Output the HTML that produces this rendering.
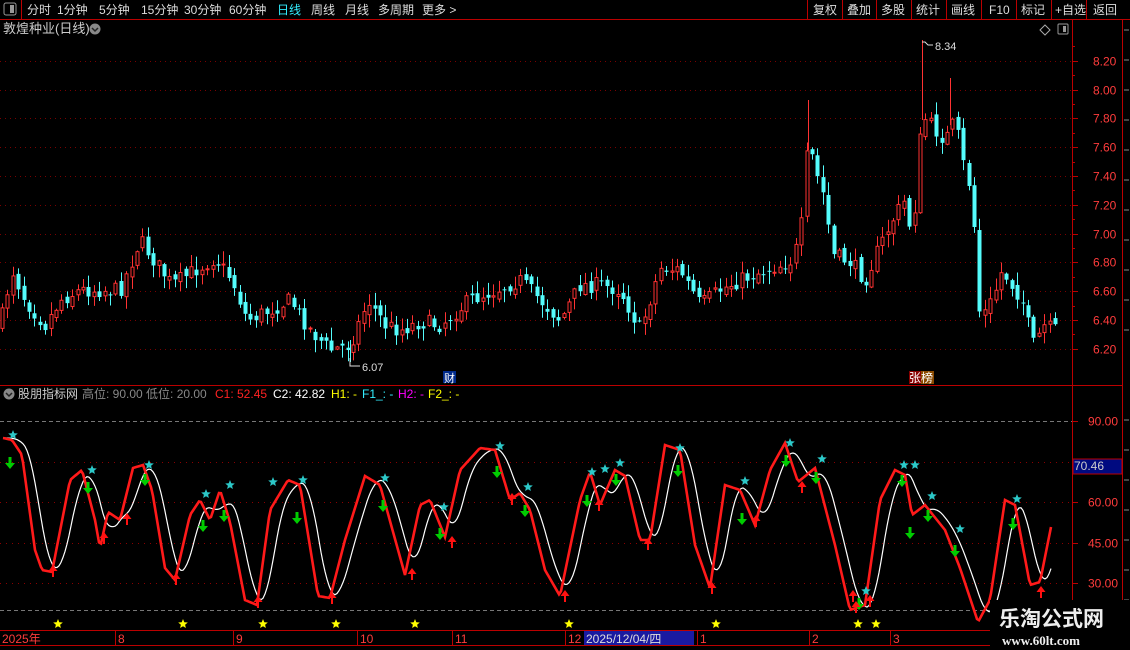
<!DOCTYPE html>
<html><head><meta charset="utf-8">
<style>
html,body{margin:0;padding:0;background:#000;width:1130px;height:650px;overflow:hidden;font-family:"Liberation Sans","Noto Sans CJK SC",sans-serif}
svg{position:absolute;left:0;top:0}
</style></head><body>
<svg id="s" width="1130" height="650" xmlns="http://www.w3.org/2000/svg" font-family="Liberation Sans, Noto Sans CJK SC, sans-serif">
<rect width="1130" height="650" fill="#000"/>
<line x1="0" y1="19.5" x2="1130" y2="19.5" stroke="#b00" />
<rect x="4" y="3" width="12" height="12" rx="2" fill="none" stroke="#999"/><rect x="10" y="5" width="4" height="8" fill="#999"/>
<line x1="21.5" y1="0" x2="21.5" y2="19" stroke="#b00"/>
<g font-size="12" fill="#ddd">
<text x="27" y="14">分时</text><text x="57" y="14">1分钟</text><text x="99" y="14">5分钟</text><text x="141" y="14">15分钟</text><text x="184" y="14">30分钟</text><text x="229" y="14">60分钟</text>
<text x="277" y="14" fill="#3ef">日线</text><text x="311" y="14">周线</text><text x="345" y="14">月线</text><text x="378" y="14">多周期</text><text x="422" y="14">更多 &gt;</text>
<text x="813" y="14">复权</text><text x="847" y="14">叠加</text><text x="881" y="14">多股</text><text x="916" y="14">统计</text><text x="951" y="14">画线</text><text x="989" y="14">F10</text><text x="1021" y="14">标记</text><text x="1055" y="14">+自选</text><text x="1093" y="14">返回</text>
</g>
<g stroke="#b00"><line x1="807.5" y1="0" x2="807.5" y2="19"/><line x1="842.5" y1="0" x2="842.5" y2="19"/><line x1="876.5" y1="0" x2="876.5" y2="19"/><line x1="911.5" y1="0" x2="911.5" y2="19"/><line x1="946.5" y1="0" x2="946.5" y2="19"/><line x1="981.5" y1="0" x2="981.5" y2="19"/><line x1="1016.5" y1="0" x2="1016.5" y2="19"/><line x1="1051.5" y1="0" x2="1051.5" y2="19"/><line x1="1086.5" y1="0" x2="1086.5" y2="19"/>
<line x1="1072.5" y1="20" x2="1072.5" y2="630"/><line x1="1122.5" y1="20" x2="1122.5" y2="650"/>
<line x1="0" y1="385.5" x2="1122" y2="385.5"/>
<line x1="0" y1="630.5" x2="1072" y2="630.5"/><line x1="0" y1="645.5" x2="1072" y2="645.5"/>
</g>
<text x="3" y="33" font-size="13" fill="#ccc">敦煌种业(日线)</text>
<circle cx="95" cy="29" r="5.5" fill="#888"/><path d="M92 28l3 3 3-3" stroke="#222" fill="none" stroke-width="1.5"/>
<path d="M1045 25l5 5-5 5-5-5z" fill="none" stroke="#aaa"/>
<rect x="1058" y="24" width="10" height="10" rx="1" fill="none" stroke="#999"/><rect x="1063" y="26" width="3" height="6" fill="#999"/>
<g id="grid"></g>
<g id="candles"></g>
<g stroke="#ff3232"><line x1="922.5" y1="40" x2="922.5" y2="120"/><line x1="808.5" y1="100" x2="808.5" y2="150"/><line x1="950.5" y1="78" x2="950.5" y2="125"/></g>
<line x1="350.5" y1="340" x2="350.5" y2="362" stroke="#54fcfc"/>
<g font-size="12" fill="#ff3c3c" id="pax"></g>
<text x="362" y="371" font-size="11" fill="#ddd">6.07</text><path d="M350 358v8h10" stroke="#ddd" fill="none"/>
<text x="935" y="50" font-size="11" fill="#ddd">8.34</text><path d="M922 42h3l3 3h5" stroke="#ddd" fill="none"/>
<rect x="443" y="371" width="13" height="12" fill="#002a8a"/><text x="444" y="382" font-size="11" fill="#fff">财</text>
<rect x="909" y="371" width="13" height="13" fill="#800"/><rect x="921" y="371" width="13" height="13" fill="#8a4a00"/><text x="909" y="382" font-size="12" fill="#fff">张榜</text>
<circle cx="9" cy="394" r="5.5" fill="#888"/><path d="M6 393l3 3 3-3" stroke="#222" fill="none" stroke-width="1.5"/>
<text y="398" font-size="12"><tspan x="18" fill="#ccc">股朋指标网</tspan><tspan x="82" fill="#888">高位: 90.00  低位: 20.00</tspan><tspan x="215" fill="#f22">C1: 52.45</tspan><tspan x="273" fill="#fff">C2: 42.82</tspan><tspan x="331" fill="#ff0">H1: -</tspan><tspan x="362" fill="#3ef">F1_: -</tspan><tspan x="398" fill="#f0f">H2: -</tspan><tspan x="428" fill="#ff0">F2_: -</tspan></text>
<g id="igrid"></g>
<g id="ind"></g>
<rect x="1073" y="459" width="49" height="15" fill="#000a80" stroke="#b00"/><text x="1074" y="470" font-size="12" fill="#ccc">70.46</text>
<g font-size="12" fill="#ff3c3c"><text x="2" y="643">2025年</text><text x="118" y="643">8</text><text x="236" y="643">9</text><text x="360" y="643">10</text><text x="455" y="643">11</text><text x="568" y="643">12</text><text x="700" y="643">1</text><text x="812" y="643">2</text><text x="893" y="643">3</text></g>
<g stroke="#b00"><line x1="115.5" y1="630" x2="115.5" y2="645"/><line x1="233.5" y1="630" x2="233.5" y2="645"/><line x1="357.5" y1="630" x2="357.5" y2="645"/><line x1="452.5" y1="630" x2="452.5" y2="645"/><line x1="565.5" y1="630" x2="565.5" y2="645"/><line x1="697.5" y1="630" x2="697.5" y2="645"/><line x1="809.5" y1="630" x2="809.5" y2="645"/><line x1="890.5" y1="630" x2="890.5" y2="645"/></g>
<rect x="584" y="631" width="110" height="14" fill="#1a1aa0"/><text x="586" y="643" font-size="12" fill="#ddd">2025/12/04/四</text>
<rect x="1123" y="20" width="7" height="630" fill="#000"/>
<g stroke="#888" stroke-width="1"><path d="M1124 30h5M1124 60h5M1124 90h5M1124 120h5M1124 150h5M1124 180h5M1124 210h5M1124 240h5M1124 270h5M1124 300h5M1124 330h5M1124 420h5M1124 450h5M1124 480h5M1124 510h5M1124 540h5M1124 570h5M1124 600h5"/></g>
<rect x="990" y="600" width="140" height="50" fill="#000"/>
<text x="999" y="626" font-size="21" font-weight="bold" fill="#eee">乐淘公式网</text>
<text x="1002" y="645" font-size="13" font-weight="bold" fill="#eee" font-family="Liberation Serif, serif">www.60lt.com</text>
</svg>
<script>
(function(){
var NS="http://www.w3.org/2000/svg";
function el(p,t,a){var e=document.createElementNS(NS,t);for(var k in a)e.setAttribute(k,a[k]);p.appendChild(e);return e;}
var g=document.getElementById('grid'),pax=document.getElementById('pax');
for(var i=0;i<11;i++){var p=8.2-i*0.2,y=Math.round(60.7+i*28.8)+0.5;
el(g,'line',{x1:0,y1:y,x2:1072,y2:y,stroke:'#7a0000','stroke-dasharray':'1,4'});
el(g,'line',{x1:1072,y1:y,x2:1078,y2:y,stroke:'#b00'});
var t=el(pax,'text',{x:1093,y:y+4});t.textContent=p.toFixed(2);}
for(var i=0;i<21;i++){var y=Math.round(46.3+i*14.4)+0.5;el(g,'line',{x1:1072,y1:y,x2:1075,y2:y,stroke:'#b00'});}
var K=[[0,325],[12,270],[25,300],[45,325],[60,300],[80,290],[100,290],[120,290],[140,240],[155,262],[172,285],[195,270],[215,258],[232,280],[247,320],[270,310],[290,300],[310,330],[330,350],[350,345],[368,300],[385,325],[400,330],[420,322],[440,325],[470,300],[495,290],[520,280],[540,300],[560,320],[580,285],[600,285],[620,290],[640,330],[660,268],[680,270],[700,305],[720,290],[740,280],[770,268],[790,262],[800,240],[808,140],[815,170],[825,200],[832,255],[850,262],[865,280],[880,245],[895,215],[905,200],[912,240],[922,115],[935,130],[945,140],[955,120],[962,160],[972,195],[980,320],[992,300],[1002,270],[1012,285],[1022,300],[1033,345],[1045,325],[1052,330]];
function interp(A,x){for(var i=1;i<A.length;i++){if(x<=A[i][0]){var a=A[i-1],b=A[i],t=(x-a[0])/(b[0]-a[0]);return a[1]+t*(b[1]-a[1]);}}return A[A.length-1][1];}
var seed=7;function rnd(){seed=(seed*16807)%2147483647;return seed/2147483647;}
var cg=document.getElementById('candles');var prev=interp(K,0);
for(var x=2;x<1055;x+=5.4){var c=interp(K,x)+(rnd()-0.5)*16;var o=prev+(rnd()-0.5)*8;
var hi=Math.min(o,c)-rnd()*12-1,lo=Math.max(o,c)+rnd()*12+1;var isUp=c<o;var cx=Math.round(x)+0.5;
var col=isUp?'#ff3232':'#54fcfc';
el(cg,'line',{x1:cx,y1:hi,x2:cx,y2:lo,stroke:col});
var bt=Math.min(o,c),h=Math.max(1,Math.abs(o-c));
if(isUp)el(cg,'rect',{x:cx-1.5,y:bt,width:3,height:h,fill:'#000',stroke:col});
else el(cg,'rect',{x:cx-2,y:bt,width:4,height:h,fill:col});
prev=c;}
var ig=document.getElementById('igrid');
el(ig,'line',{x1:0,y1:421.5,x2:1072,y2:421.5,stroke:'#777','stroke-dasharray':'4,3'});
el(ig,'line',{x1:0,y1:610.5,x2:1072,y2:610.5,stroke:'#777','stroke-dasharray':'4,3'});
[[462.5,''],[502.5,'60.00'],[543.5,'45.00'],[583.5,'30.00'],[421.5,'90.00']].forEach(function(a){
if(a[0]!=421.5)el(ig,'line',{x1:0,y1:a[0],x2:1072,y2:a[0],stroke:'#8a0000','stroke-dasharray':'1,5'});
el(ig,'line',{x1:1072,y1:a[0],x2:1078,y2:a[0],stroke:'#b00'});
if(a[1]){var t=el(ig,'text',{x:1088,y:a[0]+4,'font-size':12,fill:'#ff3c3c'});t.textContent=a[1];}});
var R=[[3,438],[12,440],[22,455],[35,550],[42,570],[52,572],[70,480],[82,470],[95,520],[100,548],[108,512],[120,520],[133,468],[143,465],[152,490],[165,568],[175,580],[190,515],[200,500],[210,520],[220,490],[230,522],[245,600],[257,605],[270,510],[288,480],[300,485],[318,596],[330,598],[345,540],[365,476],[380,485],[405,575],[420,505],[430,500],[445,537],[460,470],[480,448],[495,450],[510,500],[520,493],[530,510],[545,570],[560,596],[580,500],[590,472],[600,505],[615,470],[625,476],[640,540],[650,540],[665,445],[680,450],[695,545],[710,588],[725,485],[740,490],[755,525],[770,470],[785,443],[798,482],[815,468],[835,545],[850,610],[865,605],[880,500],[895,470],[905,475],[912,515],[925,505],[945,530],[960,568],[978,622],[990,600],[1005,500],[1015,505],[1030,585],[1040,582],[1052,522]];
var ind=document.getElementById('ind');
var pr='',pw='';for(var x=3;x<=1052;x+=2){pr+=(x==3?'M':'L')+x+' '+interp(R,x).toFixed(1);
var s=0,n=0;for(var d=-14;d<=2;d+=2){s+=interp(R,Math.max(3,x+d-4));n++;}pw+=(x==3?'M':'L')+x+' '+(s/n).toFixed(1);}
el(ind,'path',{d:pw,stroke:'#fff','stroke-width':1.2,fill:'none'});
el(ind,'path',{d:pr,stroke:'#ff1a1a','stroke-width':2.6,fill:'none'});
function star(x,y,r,c){var d='';for(var i=0;i<10;i++){var a=-Math.PI/2+i*Math.PI/5,rr=i%2?r*0.45:r;d+=(i?'L':'M')+(x+rr*Math.cos(a)).toFixed(1)+' '+(y+rr*Math.sin(a)).toFixed(1);}el(ind,'path',{d:d+'Z',fill:c});}
[58,183,263,336,415,569,716,858,876].forEach(function(x){star(x,624,5,'#ff0');});
[[13,435],[92,470],[149,465],[206,494],[230,485],[273,482],[303,480],[385,478],[444,507],[500,446],[528,487],[592,472],[605,469],[620,463],[680,448],[745,481],[790,443],[822,459],[866,591],[904,465],[915,465],[932,496],[960,529],[1017,499]].forEach(function(a){star(a[0],a[1],5,'#2cc8c8');});
function dArrow(x,y){el(ind,'path',{d:'M'+(x-1.5)+' '+y+'h3v6h3.5l-5 6-5-6h3.5z',fill:'#0c0'});}
function uArrow(x,y){el(ind,'path',{d:'M'+(x-1)+' '+(y+12)+'v-6h-3.5l4.5-6 4.5 6h-3.5v6z',fill:'#f11'});}
[[10,457],[88,482],[145,474],[203,520],[224,510],[297,512],[383,500],[440,528],[497,466],[525,505],[587,495],[616,474],[678,465],[742,513],[786,455],[816,472],[910,527],[928,510],[955,545],[1013,518],[859,598],[902,475]].forEach(function(a){dArrow(a[0],a[1]);});
[[53,565],[104,532],[127,513],[176,573],[258,596],[332,592],[412,568],[452,536],[512,493],[565,590],[599,499],[648,538],[712,582],[756,515],[802,481],[856,601],[870,595],[1041,586],[853,590]].forEach(function(a){uArrow(a[0],a[1]);});
})();
</script>
</body></html>
